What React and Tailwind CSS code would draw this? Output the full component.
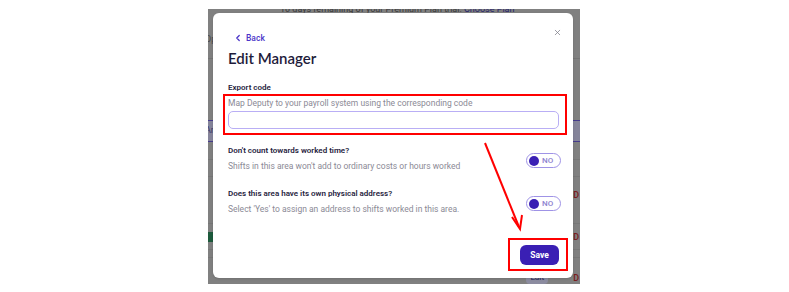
import { ChevronLeft, X } from 'lucide-react';

function Toggle() {
  return (
    <div className="flex h-[15px] w-[35px] items-center rounded-full border border-[#9f93e6] bg-white pl-[2px]">
      <span className="h-[10px] w-[10px] rounded-full bg-[#3a1fb4]" />
      <span className="ml-[3px] text-[8px] font-medium leading-none text-[#8d82cf]">NO</span>
    </div>
  );
}

function SettingRow({ title, hint }) {
  return (
    <div className="flex items-start justify-between">
      <div>
        <p className="text-[8px] font-semibold leading-[12px] text-[#262340]">{title}</p>
        <p className="mt-[3px] text-[8.5px] leading-[12px] text-[#8b8a96]">{hint}</p>
      </div>
      <div className="mt-[8px] mr-[-2px]">
        <Toggle />
      </div>
    </div>
  );
}

// dimmed page behind the modal
function Backdrop() {
  return (
    <div className="pointer-events-none absolute inset-0 flex flex-col text-[9px]">
      <p className="-mt-[6px] h-[12px] whitespace-nowrap pl-[72px] leading-[12px] text-[#3a3a3a]">
        10 days remaining of your Premium Plan trial. <span className="text-[#26246a]">Choose Plan</span>
      </p>
      <p className="mt-[18px] -ml-[3px] leading-[12px] text-[#4a4a4a]">Op</p>
      <div className="mt-[13px] h-px bg-[#747474]" />
      <div className="mt-[61px] flex h-[23px] items-center border-y border-y-[#463c8c] bg-[#85849a] -ml-[3px] text-[#3e3a6a]">Ar</div>
      <div className="mt-[17px] h-px bg-[#777]" />
      <div className="mt-[16px] h-px bg-[#777]" />
      <div className="mt-[12px] flex justify-end pr-[1px] font-semibold leading-[12px] text-[#7a1f1f]">D</div>
      <div className="mt-[22px] h-px bg-[#777]" />
      <div className="mt-[7px] flex items-center justify-between">
        <span className="h-[10px] w-[6px] bg-[#1d5a3c]" />
        <span className="pr-[1px] font-semibold leading-[12px] text-[#7a1f1f]">D</span>
      </div>
      <div className="mt-[6px] h-px bg-[#777]" />
      <div className="mt-[7px] h-px bg-[#777]" />
      <div className="mt-[14px] flex items-center justify-end gap-[25px] pr-[1px]">
        <span className="rounded bg-[#8c8ca0] px-[4px] text-[8px] font-semibold text-[#3a3a66]">Edit</span>
        <span className="font-semibold leading-[12px] text-[#7a1f1f]">D</span>
      </div>
    </div>
  );
}

export default function App() {
  return (
    <div className="relative h-[292px] w-[789px] overflow-hidden bg-white" style={{ fontFamily: 'Roboto, "Liberation Sans", sans-serif' }}>
      <div className="pl-[208px] pt-[9px]">
        <div className="relative h-[275px] w-[372px] overflow-hidden bg-[#808080] pl-[5px] pt-[4px]">
          <Backdrop />
          <div className="relative flex h-[265px] w-[360px] flex-col rounded-[6px] bg-white pl-[15px] pr-[14px] pt-[19px] shadow">
            <button className="absolute right-[11px] top-[15px] text-[#7d7d88]">
              <X size={9} strokeWidth={2} />
            </button>
            <div className="flex items-center gap-[3px] pl-[5px] text-[#4b35c9]">
              <ChevronLeft size={10} strokeWidth={3} />
              <span className="text-[8.5px] font-medium leading-[12px]">Back</span>
            </div>
            <h2 className="mt-[3px] text-[15px] font-semibold leading-[22px] text-[#1e1b3a]" style={{ fontFamily: 'Lato, sans-serif' }}>
              Edit Manager
            </h2>
            <p className="mt-[13px] text-[8px] font-semibold leading-[12px] text-[#262340]">Export code</p>
            <p className="mt-[3px] text-[8.5px] leading-[12px] text-[#8b8a96]">Map Deputy to your payroll system using the corresponding code</p>
            <input className="mt-[2px] h-[18px] w-full rounded-[5px] border border-[#b9aef5] outline-none" />
            <div className="mt-[16px]">
              <SettingRow title="Don't count towards worked time?" hint="Shifts in this area won't add to ordinary costs or hours worked" />
            </div>
            <div className="mt-[16px]">
              <SettingRow title="Does this area have its own physical address?" hint="Select 'Yes' to assign an address to shifts worked in this area." />
            </div>
            <div className="mt-[30px] flex justify-end">
              <button className="h-[20px] w-[39px] rounded-[6px] bg-[#3a1fb4] text-[8.5px] font-bold text-white">Save</button>
            </div>
          </div>
        </div>
      </div>

      {/* red annotation marks */}
      <div className="pointer-events-none absolute left-[223px] top-[94px] h-[41px] w-[344px] border-2 border-[#ff0000]" />
      <div className="pointer-events-none absolute left-[508px] top-[238px] h-[33px] w-[60px] border-2 border-[#ff0000]" />
      <svg className="pointer-events-none absolute left-0 top-0" width="789" height="292">
        <line x1="485" y1="143" x2="519" y2="227" stroke="#ff0000" strokeWidth="2" />
        <path d="M512 217 L520 229 L522 215" fill="none" stroke="#ff0000" strokeWidth="2" strokeLinejoin="miter" />
      </svg>
    </div>
  );
}
